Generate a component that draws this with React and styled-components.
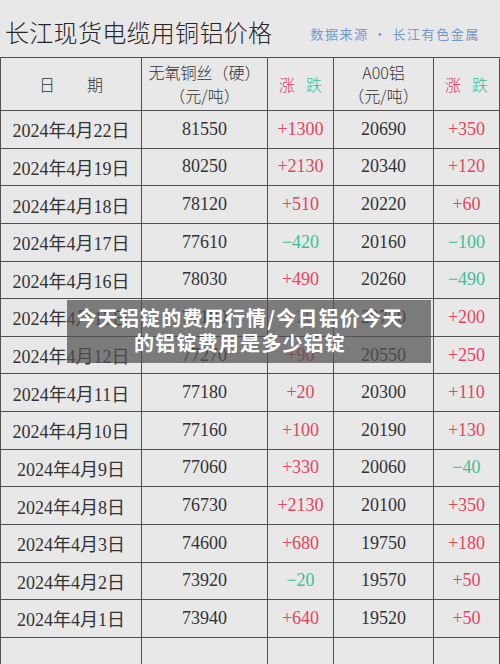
import { styled, createGlobalStyle } from "styled-components";

const rows = [
  ["2024年4月22日", "81550", "+1300", "20690", "+350"],
  ["2024年4月19日", "80250", "+2130", "20340", "+120"],
  ["2024年4月18日", "78120", "+510", "20220", "+60"],
  ["2024年4月17日", "77610", "−420", "20160", "−100"],
  ["2024年4月16日", "78030", "+490", "20260", "−490"],
  ["2024年4月15日", "77180", "+20", "20750", "+200"],
  ["2024年4月12日", "77270", "+90", "20550", "+250"],
  ["2024年4月11日", "77180", "+20", "20300", "+110"],
  ["2024年4月10日", "77160", "+100", "20190", "+130"],
  ["2024年4月9日", "77060", "+330", "20060", "−40"],
  ["2024年4月8日", "76730", "+2130", "20100", "+350"],
  ["2024年4月3日", "74600", "+680", "19750", "+180"],
  ["2024年4月2日", "73920", "−20", "19570", "+50"],
  ["2024年4月1日", "73940", "+640", "19520", "+50"],
];

function App() {
  return (
    <>
      <GlobalStyle />
      <Page>
        <TopBar>
          <Title>长江现货电缆用铜铝价格</Title>
          <Source>数据来源 · 长江有色金属</Source>
        </TopBar>
        <Table>
          <HeadCell>日　　期</HeadCell>
          <HeadCell>
            无氧铜丝（硬）
            <br />
            （元/吨）
          </HeadCell>
          <HeadCell>
            <Up>涨</Up>
            <Down>跌</Down>
          </HeadCell>
          <HeadCell>
            A00铝
            <br />
            （元/吨）
          </HeadCell>
          <HeadCell>
            <Up>涨</Up>
            <Down>跌</Down>
          </HeadCell>
          {rows.map((r) =>
            r.map((v, i) => (
              <Cell key={r[0] + i} $tone={i === 2 || i === 4 ? (v[0] === "+" ? "up" : "down") : "plain"}>
                {v}
              </Cell>
            ))
          )}
          {[0, 1, 2, 3, 4].map((i) => (
            <Cell key={"empty" + i} />
          ))}
        </Table>
        <Banner>
          今天铝锭的费用行情/今日铝价今天
          <br />
          的铝锭费用是多少铝锭
        </Banner>
      </Page>
    </>
  );
}

export default App;

const GlobalStyle = createGlobalStyle`
  body {
    margin: 0;
    background-color: #e8e8e8;
  }
`;

const Page = styled.div`
  position: relative;
  width: 500px;
  height: 664px;
  overflow: hidden;
  background-color: #e8e8e8;
`;

const TopBar = styled.div`
  height: 57px;
  display: flex;
  align-items: center;
  justify-content: space-between;
  padding: 6px 20px 0 5px;
  box-sizing: border-box;
`;

const Title = styled.div`
  font-family: "Noto Sans CJK SC", sans-serif;
  font-size: 24px;
  font-weight: 300;
  color: #262626;
  letter-spacing: 0.3px;
`;

const Source = styled.div`
  font-family: "Noto Sans CJK SC", sans-serif;
  font-size: 13px;
  color: #7597cc;
  letter-spacing: 1.6px;
  padding-top: 4px;
`;

const Table = styled.div`
  display: grid;
  grid-template-columns: 141px 126px 66px 100px 66px;
  grid-template-rows: 53px repeat(14, 37.64px) 40px;
  border-top: 1px solid #505050;
  border-left: 1px solid #505050;
`;

const HeadCell = styled.div`
  display: flex;
  align-items: center;
  justify-content: center;
  text-align: center;
  border-right: 1px solid #505050;
  border-bottom: 1px solid #505050;
  font-family: "Noto Sans CJK SC", sans-serif;
  font-weight: 300;
  font-size: 16px;
  line-height: 23px;
  color: #333;
`;

const Up = styled.span`
  color: #d8395a;
`;

const Down = styled.span`
  color: #3fbf92;
  margin-left: 11px;
`;

const toneColor = {
  up: "#e2465e",
  down: "#3fbf92",
  plain: "#333",
};

const Cell = styled.div`
  display: flex;
  align-items: center;
  justify-content: center;
  border-right: 1px solid #505050;
  border-bottom: 1px solid #505050;
  font-family: "Liberation Serif", "Noto Sans CJK SC", serif;
  font-size: 18px;
  color: ${(p) => toneColor[p.$tone || "plain"]};
`;

const Banner = styled.div`
  position: absolute;
  left: 67px;
  top: 300px;
  width: 364px;
  height: 63px;
  box-sizing: border-box;
  padding: 5px 18px 0 0;
  background-color: rgba(80, 80, 80, 0.72);
  color: #fff;
  font-family: "Noto Sans CJK SC", sans-serif;
  font-weight: 700;
  font-size: 20px;
  line-height: 25px;
  letter-spacing: 1.2px;
  text-align: center;
`;
